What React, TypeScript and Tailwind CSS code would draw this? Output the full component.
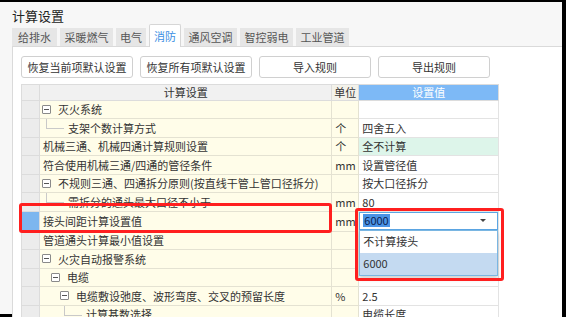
type Row = {
  label: string;
  kind: "box" | "leaf" | "plain";
  pad: string;
  unit?: string;
  value?: string;
  green?: boolean;
  tall?: boolean;
  active?: boolean;
};

const tabs = [
  { name: "给排水", w: "w-[45px]" },
  { name: "采暖燃气", w: "w-[53px]" },
  { name: "电气", w: "w-[30px]" },
  { name: "消防", w: "w-[32px]", active: true },
  { name: "通风空调", w: "w-[53px]" },
  { name: "智控弱电", w: "w-[53px]" },
  { name: "工业管道", w: "w-[53px]" },
];

const buttons = ["恢复当前项默认设置", "恢复所有项默认设置", "导入规则", "导出规则"];

const rows: Row[] = [
  { label: "灭火系统", kind: "box", pad: "pl-[2px]" },
  { label: "支架个数计算方式", kind: "leaf", pad: "pl-[6px]", unit: "个", value: "四舍五入" },
  { label: "机械三通、机械四通计算规则设置", kind: "plain", pad: "pl-[3px]", unit: "个", value: "全不计算", green: true },
  { label: "符合使用机械三通/四通的管径条件", kind: "plain", pad: "pl-[3px]", unit: "mm", value: "设置管径值" },
  { label: "不规则三通、四通拆分原则(按直线干管上管口径拆分)", kind: "box", pad: "pl-[2px]", value: "按大口径拆分" },
  { label: "需拆分的通头最大口径不小于", kind: "leaf", pad: "pl-[6px]", unit: "mm", value: "80" },
  { label: "接头间距计算设置值", kind: "plain", pad: "pl-[3px]", unit: "mm", tall: true, active: true },
  { label: "管道通头计算最小值设置", kind: "plain", pad: "pl-[3px]" },
  { label: "火灾自动报警系统", kind: "box", pad: "pl-[2px]" },
  { label: "电缆", kind: "box", pad: "pl-[11px]" },
  { label: "电缆敷设弛度、波形弯度、交叉的预留长度", kind: "box", pad: "pl-[20px]", unit: "%", value: "2.5" },
  { label: "计算基数选择", kind: "leaf", pad: "pl-[24px]", value: "电缆长度" },
];

const MinusBox = () => (
  <span className="flex h-[9px] w-[9px] shrink-0 items-center justify-center rounded-[1px] border border-[#8a8a8a] bg-white">
    <span className="h-px w-[5px] bg-[#555]" />
  </span>
);

const DropdownCell = () => (
  <div className="relative h-[18px] w-full self-start border border-[#5ba6e4] bg-white">
    <div className="flex h-full items-center justify-between pl-[3px] pr-[11px]">
      <span className="bg-[#4a93e6] px-px leading-[13px] text-[#0d2250]">6000</span>
      <span className="h-0 w-0 border-x-[3px] border-t-[3px] border-x-transparent border-t-[#444]" />
    </div>
    <div className="absolute left-[-1px] right-[-1px] top-[17px] z-10 border border-[#7ab6e2] bg-white shadow-[0_3px_4px_rgba(0,0,0,0.18)]">
      <div className="flex h-[22px] items-center pl-[3px]">不计算接头</div>
      <div className="flex h-[22px] items-center bg-[#c4daf1] pl-[3px]">6000</div>
    </div>
  </div>
);

export default function App() {
  return (
    <div
      className="relative h-[317px] w-[566px] overflow-hidden bg-black pb-[3px] pr-[4px] pt-[2px] text-[11px] text-[#333]"
      style={{ fontFamily: '"Noto Sans CJK SC", "Noto Sans", sans-serif' }}
    >
      <div className="flex h-full flex-col bg-[#f7f7f7]">
        {/* Title */}
        <div className="h-[22px] pl-[12px] pt-[6px] text-[13px] leading-[16px] text-[#222]">计算设置</div>

        {/* Tabs */}
        <div className="relative z-10 flex h-[22px] items-end gap-[3px] pl-[12px]">
          {tabs.map((t) =>
            t.active ? (
              <div
                key={t.name}
                className={`${t.w} mb-[-1px] flex h-[23px] items-center justify-center rounded-t-[2px] border border-b-0 border-[#d6d6d6] bg-white text-[#3d8fe3]`}
              >
                {t.name}
              </div>
            ) : (
              <div
                key={t.name}
                className={`${t.w} flex h-[18px] items-center justify-center bg-[#e6e6e6] text-[#555]`}
              >
                {t.name}
              </div>
            )
          )}
        </div>

        {/* Panel */}
        <div className="ml-[12px] flex-1 border-l border-t border-[#dadada] bg-white pl-[8px] pt-[9px]">
          <div className="flex gap-[7px]">
            {buttons.map((b) => (
              <div
                key={b}
                className="flex h-[22px] w-[112px] items-center justify-center rounded-[3px] border border-[#d0d0d0] bg-white text-[#333]"
              >
                {b}
              </div>
            ))}
          </div>

          {/* Table */}
          <div className="mt-[6px] w-[478px] border-l border-t border-[#dcdcdc]">
            <div className="flex h-[15.5px] leading-none">
              <div className="w-[18px] border-b border-r border-[#dcdcdc] bg-[#efefef]" />
              <div className="flex w-[293px] items-center justify-center border-b border-r border-[#dcdcdc] bg-[#f1f1f1]">
                计算设置
              </div>
              <div className="flex w-[27px] items-center justify-center border-b border-r border-[#dcdcdc] bg-[#f3f2ea]">
                单位
              </div>
              <div className="flex w-[140px] items-center justify-center border-b border-r border-[#dcdcdc] bg-[#7db9f6] text-white">
                设置值
              </div>
            </div>

            {rows.map((r) => (
              <div key={r.label} className={`flex ${r.tall ? "h-[20px]" : "h-[18.5px]"}`}>
                <div
                  className={`w-[18px] border-b border-r border-[#dcdcdc] ${r.active ? "bg-[#7db6ef]" : "bg-[#ececec]"}`}
                />
                <div
                  className={`flex w-[293px] items-center whitespace-nowrap border-b border-r border-[#e4e2d2] bg-[#fffde9] ${r.pad}`}
                >
                  {r.kind === "box" && (
                    <>
                      <MinusBox />
                      <span className="ml-[7px]">{r.label}</span>
                    </>
                  )}
                  {r.kind === "leaf" && (
                    <>
                      <span className="h-[10px] w-[18px] self-start border-b border-l border-[#c9c9c9]" />
                      <span className="ml-[4px]">{r.label}</span>
                    </>
                  )}
                  {r.kind === "plain" && <span>{r.label}</span>}
                </div>
                <div className="flex w-[27px] items-center border-b border-r border-[#e4e2d2] bg-[#fffde9] pl-[3px]">
                  {r.unit}
                </div>
                <div
                  className={`flex w-[140px] items-center border-b border-r border-[#e3e3e3] ${r.green ? "bg-[#ddf5ea]" : "bg-white"} ${r.active ? "" : "pl-[3px]"}`}
                >
                  {r.active ? <DropdownCell /> : r.value}
                </div>
              </div>
            ))}
          </div>
        </div>
      </div>

      {/* Red annotation boxes */}
      <div className="pointer-events-none absolute left-[19px] top-[203px] h-[30px] w-[313px] rounded-[3px] border-[3px] border-[#ff1f1f]" />
      <div className="pointer-events-none absolute left-[355px] top-[208px] z-20 h-[73px] w-[149px] rounded-[3px] border-[3px] border-[#ff1f1f]" />
    </div>
  );
}
